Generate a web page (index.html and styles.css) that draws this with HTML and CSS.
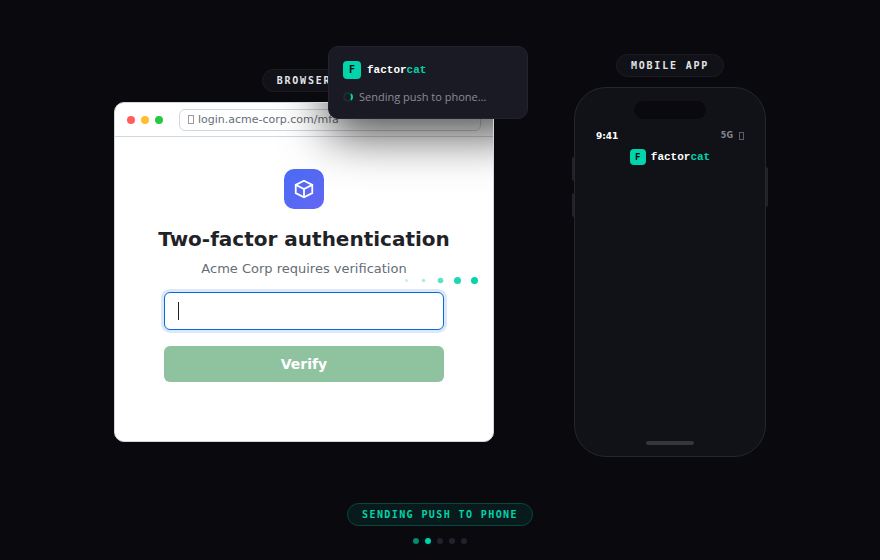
FILE: index.html
```html
<!DOCTYPE html>
<html lang="en">
<head>
    <meta charset="UTF-8">
    <meta name="viewport" content="width=device-width, initial-scale=1.0">
    <title>factorcat</title>
    <link rel="stylesheet" href="styles.css">
</head>
<body>
    <main class="stage">
        <section class="device">
            <div class="label">BROWSER</div>
            <div class="browser">
                <div class="toolbar">
                    <div class="lights">
                        <span class="light red"></span>
                        <span class="light yellow"></span>
                        <span class="light green"></span>
                    </div>
                    <div class="address">
                        <span class="glyph-box"></span>
                        <input class="url" type="text" value="login.acme-corp.com/mfa" aria-label="Address" readonly>
                    </div>
                </div>
                <form class="login">
                    <div class="logo">
                        <svg width="22" height="22" viewBox="0 0 24 24" fill="none" stroke="#fff" stroke-width="2" stroke-linejoin="miter">
                            <path d="M12 3L21 7.500v9L12 21 3 16.500v-9z"/>
                            <path d="M3 7.500L12 12l9-4.500M12 12v9"/>
                        </svg>
                    </div>
                    <h1 class="title">Two-factor authentication</h1>
                    <p class="subtitle">Acme Corp requires verification</p>
                    <div class="field">
                        <input class="code" type="text" aria-label="Verification code">
                        <span class="caret"></span>
                    </div>
                    <button class="verify" type="button">Verify</button>
                </form>
                <div class="signal">
                    <span class="dot dot-1"></span>
                    <span class="dot dot-2"></span>
                    <span class="dot dot-3"></span>
                    <span class="dot dot-4"></span>
                    <span class="dot dot-5"></span>
                </div>
                <div class="shade"><div class="shade-cast"></div></div>
            </div>
            <div class="toast">
                <div class="brand">
                    <span class="brand-icon">F</span>
                    <span class="brand-name">factor<span class="accent">cat</span></span>
                </div>
                <div class="toast-status">
                    <span class="spinner"></span>
                    <span>Sending push to phone…</span>
                </div>
            </div>
        </section>

        <section class="device">
            <div class="label">MOBILE APP</div>
            <div class="phone">
                <span class="side side-up"></span>
                <span class="side side-down"></span>
                <span class="side side-power"></span>
                <div class="notch"></div>
                <div class="status">
                    <span class="time">9:41</span>
                    <span class="network">5G <span class="glyph-box small"></span></span>
                </div>
                <div class="brand phone-brand">
                    <span class="brand-icon">F</span>
                    <span class="brand-name">factor<span class="accent">cat</span></span>
                </div>
                <div class="home"></div>
            </div>
        </section>
    </main>

    <footer class="progress">
        <div class="label step">SENDING PUSH TO PHONE</div>
        <div class="steps">
            <span class="pip done"></span>
            <span class="pip active"></span>
            <span class="pip"></span>
            <span class="pip"></span>
            <span class="pip"></span>
        </div>
    </footer>
</body>
</html>
```

FILE: styles.css
```css
* {
    box-sizing: border-box;
}

body {
    margin: 0;
    padding: 8px 0 16px;
    min-height: 100vh;
    display: flex;
    flex-direction: column;
    background: #09090e;
    color: #fff;
    font-family: "DejaVu Sans", sans-serif;
}

.stage {
    flex: 1;
    display: flex;
    justify-content: center;
    align-items: center;
    gap: 80px;
}

.device {
    position: relative;
    display: flex;
    flex-direction: column;
    align-items: center;
    gap: 10px;
}

.label {
    padding: 4px 14px;
    border: 1px solid #1c1c26;
    border-radius: 12px;
    background: #111217;
    color: #e4e4e8;
    font: bold 10px/13px "DejaVu Sans Mono", monospace;
    letter-spacing: 0.18em;
}

/* browser */
.browser {
    position: relative;
    width: 380px;
    min-height: 340px;
    border: 1px solid #d0d7de;
    border-radius: 10px;
    background: #fff;
    overflow: hidden;
}

.toolbar {
    display: flex;
    align-items: center;
    gap: 16px;
    height: 34px;
    padding: 0 12px;
    border-bottom: 1px solid #d0d7de;
}

.lights {
    display: flex;
    gap: 6px;
}

.light {
    width: 8px;
    height: 8px;
    border-radius: 50%;
}

.red { background: #ff5f57; }
.yellow { background: #febc2e; }
.green { background: #28c840; }

.address {
    flex: 1;
    display: flex;
    align-items: center;
    gap: 4px;
    height: 22px;
    padding: 0 8px;
    border: 1px solid #d0d7de;
    border-radius: 6px;
}

.glyph-box {
    display: inline-block;
    width: 6px;
    height: 9px;
    border: 1px solid #989ba0;
}

.url {
    flex: 1;
    min-width: 0;
    padding: 0;
    border: 0;
    background: none;
    color: #656d76;
    font: 11px/16px "DejaVu Sans", sans-serif;
}

.login {
    display: flex;
    flex-direction: column;
    align-items: center;
    padding: 32px 49px;
}

.logo {
    display: flex;
    justify-content: center;
    align-items: center;
    width: 40px;
    height: 40px;
    border-radius: 10px;
    background: linear-gradient(135deg, #4a6cf7, #6366f1);
}

.title {
    margin: 18px 0 9px;
    color: #1f2328;
    font-size: 20px;
    line-height: 24px;
    white-space: nowrap;
}

.subtitle {
    margin: 0 0 14px;
    color: #656d76;
    font-size: 13px;
    line-height: 18px;
}

.field {
    position: relative;
    width: 100%;
    margin-bottom: 16px;
}

.code {
    display: block;
    width: 100%;
    height: 38px;
    padding: 0 14px;
    border: 1px solid #0969da;
    border-radius: 6px;
    background: #fff;
    box-shadow: 0 0 0 3px #dae8f9;
    font-size: 14px;
}

.caret {
    position: absolute;
    left: 14px;
    top: 10px;
    width: 1px;
    height: 18px;
    background: #1f2328;
}

.verify {
    width: 100%;
    height: 36px;
    border: 0;
    border-radius: 6px;
    background: #8fc29f;
    color: #fff;
    font: bold 14px/20px "DejaVu Sans", sans-serif;
}

/* dots flying towards the phone */
.signal {
    position: absolute;
    top: 174px;
    right: 15px;
    display: flex;
    gap: 10px;
}

.dot {
    width: 7px;
    height: 7px;
    border-radius: 50%;
    background: #00d4aa;
}

.dot-1 { transform: scale(0.4); opacity: 0.25; }
.dot-2 { transform: scale(0.5); opacity: 0.35; }
.dot-3 { transform: scale(0.8); opacity: 0.65; }
.dot-4 { opacity: 0.9; }

/* toast shadow, stays inside the window */
.shade {
    position: absolute;
    inset: 0;
    overflow: hidden;
    pointer-events: none;
}

.shade-cast {
    position: absolute;
    left: 213px;
    top: -57px;
    width: 200px;
    height: 73px;
    border-radius: 10px;
    box-shadow: 0 16px 48px rgba(0, 0, 0, 0.7);
}

.toast {
    position: absolute;
    left: 214px;
    top: -23px;
    width: 200px;
    padding: 14px;
    border: 1px solid #22232e;
    border-radius: 10px;
    background: #1a1a25;
}

.brand {
    display: flex;
    align-items: center;
    gap: 6px;
}

.brand-icon {
    width: 18px;
    height: 18px;
    border-radius: 4px;
    background: #00d4aa;
    color: #08080c;
    font: bold 10px/18px "DejaVu Sans Mono", monospace;
    text-align: center;
}

.brand-name {
    font: bold 11px/16px "Liberation Mono", monospace;
}

.accent {
    color: #00d4aa;
}

.toast-status {
    display: flex;
    align-items: center;
    gap: 6px;
    margin-top: 10px;
    color: #8b8b97;
    font: 11px/15px "Open Sans", sans-serif;
}

.spinner {
    width: 10px;
    height: 10px;
    border: 2px solid #18302f;
    border-right-color: #00d4aa;
    border-radius: 50%;
}

/* phone */
.phone {
    position: relative;
    display: flex;
    flex-direction: column;
    width: 192px;
    height: 370px;
    padding: 13px 21px 11px;
    border: 1px solid #26272d;
    border-radius: 32px;
    background: #111217;
}

.side {
    position: absolute;
    width: 2px;
    background: #222329;
}

.side-up {
    left: -3px;
    top: 69px;
    height: 24px;
    border-radius: 2px 0 0 2px;
}

.side-down {
    left: -3px;
    top: 105px;
    height: 24px;
    border-radius: 2px 0 0 2px;
}

.side-power {
    right: -3px;
    top: 79px;
    height: 40px;
    border-radius: 0 2px 2px 0;
}

.notch {
    align-self: center;
    width: 72px;
    height: 18px;
    border-radius: 9px;
    background: #09090e;
}

.status {
    display: flex;
    justify-content: space-between;
    align-items: center;
    margin-top: 11px;
    font-size: 9px;
    font-weight: bold;
    line-height: 12px;
}

.network {
    display: flex;
    align-items: center;
    gap: 6px;
    color: #85858f;
    font-size: 8px;
}

.glyph-box.small {
    width: 5px;
    height: 8px;
    border-color: #5c5d64;
}

.phone-brand {
    justify-content: center;
    gap: 5px;
    margin-top: 7px;
}

.phone-brand .brand-icon {
    width: 16px;
    height: 16px;
    font-size: 9px;
    line-height: 16px;
}

.home {
    align-self: center;
    width: 48px;
    height: 4px;
    margin-top: auto;
    border-radius: 2px;
    background: #35363b;
}

/* progress */
.progress {
    display: flex;
    flex-direction: column;
    align-items: center;
    gap: 12px;
}

.step {
    border-color: #07483f;
    background: #081a1b;
    color: #00d4aa;
    letter-spacing: 0.14em;
}

.steps {
    display: flex;
    gap: 6px;
}

.pip {
    width: 6px;
    height: 6px;
    border-radius: 50%;
    background: #22222e;
}

.done {
    background: #038b72;
}

.active {
    background: #00d4aa;
    box-shadow: 0 0 6px rgba(0, 212, 170, 0.2);
}
```
